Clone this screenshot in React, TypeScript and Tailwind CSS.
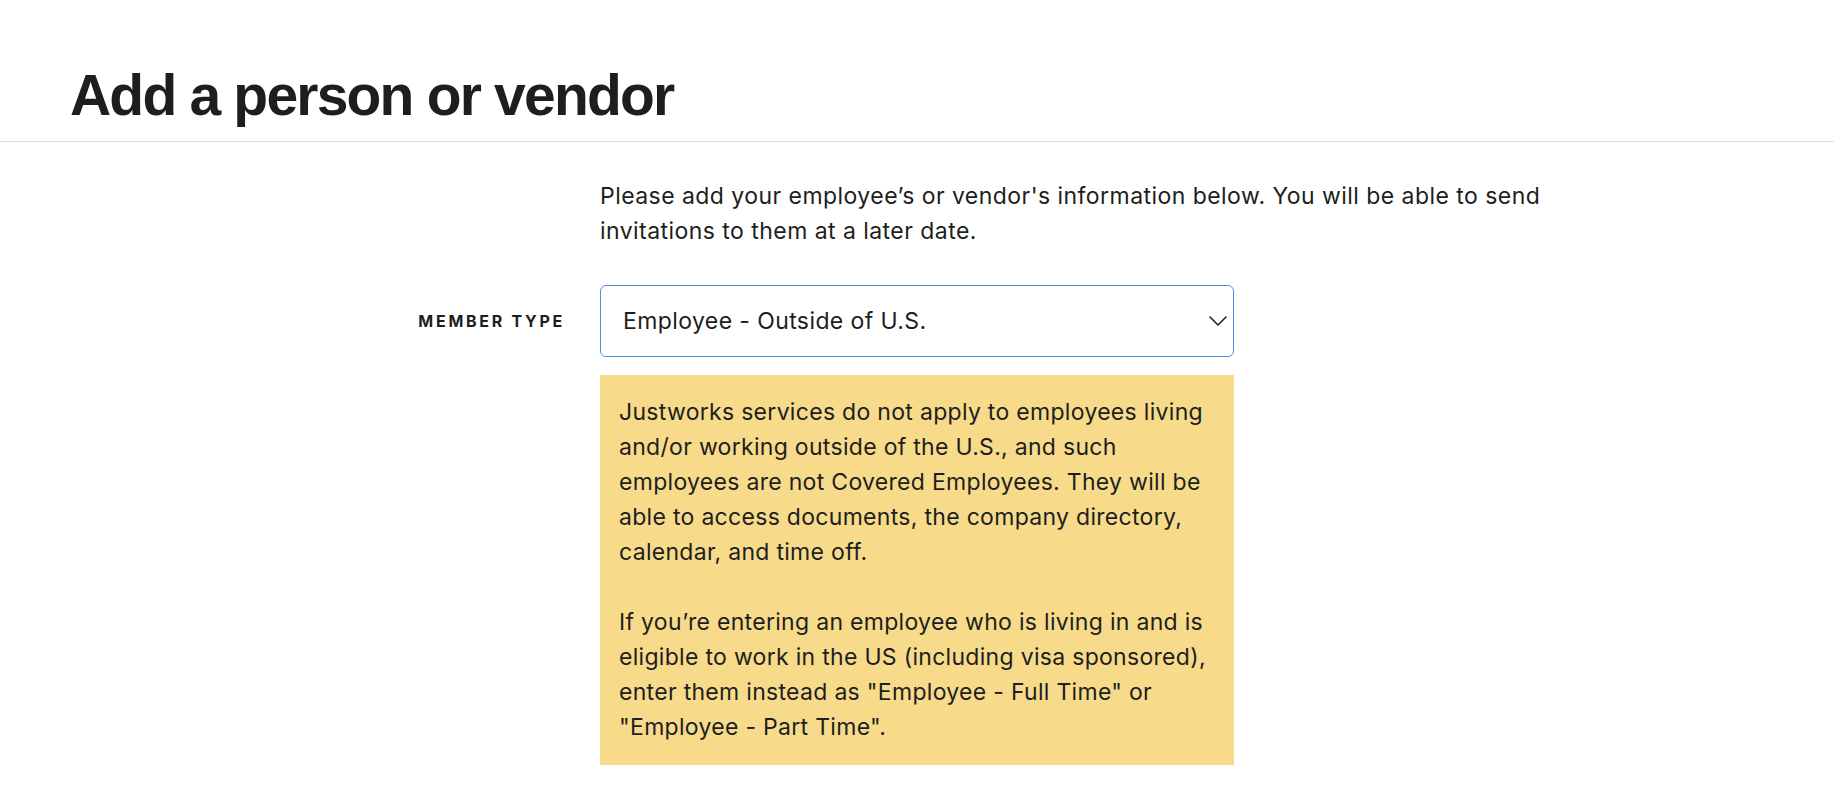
import React from "react";

const body = { fontFamily: "Inter, 'Liberation Sans', sans-serif" };

const Chevron: React.FC = () => (
  <svg width="18" height="10" viewBox="0 0 18 10" fill="none" className="shrink-0">
    <polyline points="1,1 9,9 17,1" stroke="#222" strokeWidth="1.6" strokeLinecap="round" strokeLinejoin="round" />
  </svg>
);

export default function App() {
  return (
    <div className="min-h-screen bg-white text-[#1d1e20]" style={body}>
      <header className="border-b border-[#dddddd] px-[70px] pt-[67px] pb-[17px]">
        <h1
          className="text-[57px] leading-[57px] font-bold tracking-[-1.8px]"
          style={{ fontFamily: "'Liberation Sans', Arial, sans-serif" }}
        >
          Add a person or vendor
        </h1>
      </header>

      <main className="px-[70px] pt-[37px]">
        <div className="flex">
          <div className="w-[530px] shrink-0" />
          <p className="w-[970px] text-[23px] leading-[35px] tracking-[0.45px]">
            Please add your employee’s or vendor's information below. You will be able to send invitations to them at a later date.
          </p>
        </div>

        <div className="flex items-center mt-[36px]">
          <label className="w-[530px] shrink-0 pr-[35px] text-right text-[16px] font-bold tracking-[0.17em] uppercase">
            Member type
          </label>
          <div className="w-[634px] h-[72px] rounded-[6px] border border-[#4a90e2] flex items-center justify-between pl-[22px] pr-[6px] text-[23px] tracking-[0.4px]">
            <span>Employee - Outside of U.S.</span>
            <Chevron />
          </div>
        </div>

        <div className="flex mt-[18px]">
          <div className="w-[530px] shrink-0" />
          <div className="w-[634px] bg-[#f7db8a] pl-[19px] pr-[15px] py-[20px] text-[23px] leading-[35px] tracking-[0.3px]">
            <p>
              Justworks services do not apply to employees living and/or working outside of the U.S., and such employees are not Covered Employees. They will be able to access documents, the company directory, calendar, and time off.
            </p>
            <p className="mt-[35px]">
              If you’re entering an employee who is living in and is eligible to work in the US (including visa sponsored), enter them instead as "Employee - Full Time" or "Employee - Part Time".
            </p>
          </div>
        </div>
      </main>
    </div>
  );
}
